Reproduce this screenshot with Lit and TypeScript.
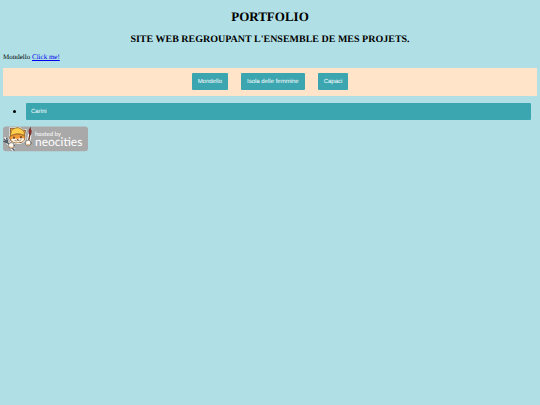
import { LitElement, html, css } from "lit";
import { customElement } from "lit/decorators.js";

@customElement("app-root")
export class AppRoot extends LitElement {
  static styles = css`
    :host {
      display: block;
      box-sizing: border-box;
      min-height: 100vh;
      padding: 9px 3px 3px;
      background: #b0e0e6;
      color: #000;
      font-family: "Liberation Serif", "Times New Roman", serif;
      font-size: 7px;
      line-height: 8px;
      text-rendering: geometricPrecision;
    }
    h1,
    h2 {
      margin: 0;
      text-align: center;
      font-weight: bold;
    }
    h1 {
      font-size: 13px;
      line-height: 16px;
    }
    h2 {
      margin-top: 8px;
      font-size: 10px;
      line-height: 13px;
    }
    p {
      margin: 7px 0;
    }
    a {
      color: #0000ee;
    }
    nav {
      display: flex;
      justify-content: center;
      gap: 13px;
      padding: 5px 0 6px;
      background: #ffe4c9;
    }
    button {
      margin: 0;
      padding: 2px 5px 0;
      border: 0;
      border-radius: 1px;
      background: #3ba6b0;
      color: #fff;
      font: 6px/15px "Liberation Sans", Arial, sans-serif;
      text-align: left;
      text-rendering: inherit;
    }
    nav button {
      padding: 2px 6px 0;
    }
    ul {
      margin: 7px 6px 6px 10px;
      padding: 0;
      list-style: none;
    }
    li {
      display: flex;
      align-items: center;
      gap: 10px;
    }
    li::before {
      content: "";
      width: 3px;
      height: 3px;
      border-radius: 50%;
      background: #000;
    }
    li button {
      flex: 1;
    }
    .host {
      display: block;
      width: 85px;
    }
    .host svg {
      display: block;
      width: 100%;
      font-family: Lato, "Noto Sans", sans-serif;
    }
  `;

  private places = ["Mondello", "Isola delle femmine", "Capaci"];

  render() {
    return html`
      <h1>PORTFOLIO</h1>
      <h2>SITE WEB REGROUPANT L'ENSEMBLE DE MES PROJETS.</h2>
      <p>Mondello <a href="#">Click me!</a></p>
      <nav>${this.places.map((p) => html`<button type="button">${p}</button>`)}</nav>
      <ul>
        <li><button type="button">Carini</button></li>
      </ul>
      <a class="host" href="#" aria-label="hosted by neocities">
        <svg viewBox="0 0 85 26">
          <rect y=".6" width="85" height="24.6" rx="3" fill="#a9a9a9" />
          <g stroke-linecap="round" stroke-linejoin="round">
            <g fill="#fff" stroke="#fff" stroke-width="2">
              <path d="M7.5 9 7.5 2 11 2.5Q15 .5 19 4L22.5 4 21.8 9Q23 15 18 16.5Q12 18 8 15L6.5 12Z" />
              <path d="M2 13 10 23M25.5 16 27.5 4" stroke-width="3.4" />
            </g>
            <path d="M25.2 17 27 8" stroke="#6f3b25" stroke-width="1.4" />
            <path d="M26 8Q25 4 27.5 1.5Q29.3 4.5 28 8.5Z" fill="#9b2b2b" stroke="#43302a" stroke-width=".6" />
            <path d="M1 13 4.5 16.5 11 24M3.6 12.4 4.8 16M.8 15.4 4.5 16.8" fill="none" stroke="#525b63" stroke-width="1.4" />
            <path d="M7.5 9 7.5 2 11 2.5Q15 .5 19 4L22.5 4 21.8 9Q23 15 18 16.5Q12 18 8 15L6.5 12Z" fill="#f29a38" stroke="#5b3b1d" stroke-width=".7" />
            <path d="M7.5 9Q7.5 4 11 2.4Q15.5 .3 19 3.6Q22 5.5 21.5 9.4Q14 5.6 7.5 10Z" fill="#ffcf4d" stroke="#76501f" stroke-width=".6" />
            <path d="M7.5 10Q14 6.6 22 9.8" fill="none" stroke="#a8702a" stroke-width=".7" />
            <path d="M8 13.6Q11 11.4 14 13Q17.5 11 21.4 12.6Q21.2 16 15 16.4Q9.6 17 8 13.6Z" fill="#fff4df" />
            <path d="M11 11V12.4M18 10.5V12" stroke="#302822" stroke-width="1.2" />
            <path d="M13.6 13H15.8L14.7 14.2Z" fill="#613324" />
            <path d="M11.8 14.6Q13.6 15.8 14.7 14.2Q16.4 15.8 18 14" fill="none" stroke="#633d27" stroke-width=".6" />
            <circle cx="8.3" cy="19.5" r="2.9" fill="#fffaf0" stroke="#4d4540" stroke-width=".6" />
            <circle cx="25.2" cy="17" r="2.9" fill="#fffaf0" stroke="#4d4540" stroke-width=".6" />
            <path d="M9.6 21.4Q8 22 6.8 20.8M26.6 18.6Q25 19.4 23.8 18.2" fill="none" stroke="#e0a661" stroke-width=".9" />
          </g>
          <text x="32" y="10" font-size="6" fill="#fff">hosted by</text>
          <text x="32" y="20" font-size="12" fill="#fff">neocities</text>
        </svg>
      </a>
    `;
  }
}
